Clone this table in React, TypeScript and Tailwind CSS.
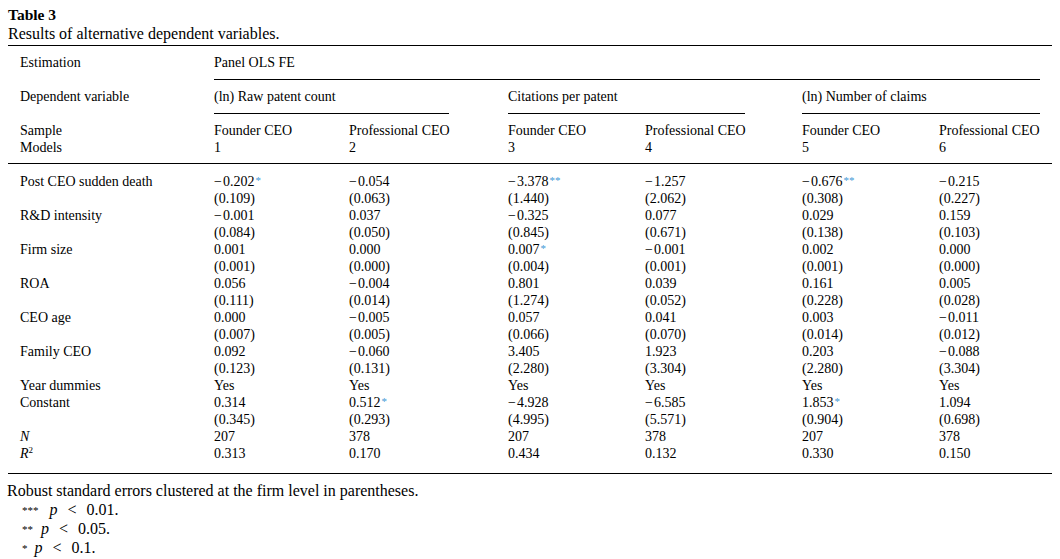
import React from "react";

const cols = "grid grid-cols-[206px_135px_159px_137px_157px_137px_1fr]";

type Row = { label: React.ReactNode; values: string[] };

const rows: Row[] = [
  { label: "Post CEO sudden death", values: ["−0.202*", "−0.054", "−3.378**", "−1.257", "−0.676**", "−0.215"] },
  { label: "", values: ["(0.109)", "(0.063)", "(1.440)", "(2.062)", "(0.308)", "(0.227)"] },
  { label: "R&D intensity", values: ["−0.001", "0.037", "−0.325", "0.077", "0.029", "0.159"] },
  { label: "", values: ["(0.084)", "(0.050)", "(0.845)", "(0.671)", "(0.138)", "(0.103)"] },
  { label: "Firm size", values: ["0.001", "0.000", "0.007*", "−0.001", "0.002", "0.000"] },
  { label: "", values: ["(0.001)", "(0.000)", "(0.004)", "(0.001)", "(0.001)", "(0.000)"] },
  { label: "ROA", values: ["0.056", "−0.004", "0.801", "0.039", "0.161", "0.005"] },
  { label: "", values: ["(0.111)", "(0.014)", "(1.274)", "(0.052)", "(0.228)", "(0.028)"] },
  { label: "CEO age", values: ["0.000", "−0.005", "0.057", "0.041", "0.003", "−0.011"] },
  { label: "", values: ["(0.007)", "(0.005)", "(0.066)", "(0.070)", "(0.014)", "(0.012)"] },
  { label: "Family CEO", values: ["0.092", "−0.060", "3.405", "1.923", "0.203", "−0.088"] },
  { label: "", values: ["(0.123)", "(0.131)", "(2.280)", "(3.304)", "(2.280)", "(3.304)"] },
  { label: "Year dummies", values: ["Yes", "Yes", "Yes", "Yes", "Yes", "Yes"] },
  { label: "Constant", values: ["0.314", "0.512*", "−4.928", "−6.585", "1.853*", "1.094"] },
  { label: "", values: ["(0.345)", "(0.293)", "(4.995)", "(5.571)", "(0.904)", "(0.698)"] },
  { label: <span className="italic">N</span>, values: ["207", "378", "207", "378", "207", "378"] },
  {
    label: (
      <span>
        <span className="italic">R</span>
        <span className="relative -top-[5px] text-[9px] leading-none">2</span>
      </span>
    ),
    values: ["0.313", "0.170", "0.434", "0.132", "0.330", "0.150"],
  },
];

const Num = ({ v }: { v: string }) => {
  const m = v.match(/^(−?)(.*?)(\**)$/);
  const neg = m?.[1];
  const body = m?.[2] ?? v;
  const stars = m?.[3];
  return (
    <span className="whitespace-nowrap">
      {neg && <span className="mr-[1px]">−</span>}
      {body}
      {stars && (
        <span className="relative -top-[2px] ml-px text-[11px] leading-none text-[#3f9ad6]">{stars}</span>
      )}
    </span>
  );
};

const Note = ({ stars, gap, value }: { stars: string; gap: string; value: string }) => (
  <div className="flex items-baseline pl-[15px]">
    <span className="relative -top-[1px] text-[11px] leading-none">{stars}</span>
    <span className={`italic ${gap}`}>p</span>
    <span className="ml-[10px]">&lt;</span>
    <span className="ml-[10px]">{value}</span>
  </div>
);

export default function App() {
  return (
    <div className="min-h-screen bg-white text-black font-['Liberation_Serif',serif]">
      <div className="pl-2 pt-[5px] text-[16px] leading-[19px]">
        <p className="font-bold text-[15.5px]">Table 3</p>
        <p>Results of alternative dependent variables.</p>
      </div>

      <div className="ml-2 mt-[2px] w-[1044px] border-t border-black text-[14px] leading-[17px]">
        {/* header */}
        <div className={cols}>
          <div className="py-2 pl-3">Estimation</div>
          <div className="col-span-6 mr-[12px] border-b border-black py-2">Panel OLS FE</div>
        </div>
        <div className={cols}>
          <div className="py-2 pl-3">Dependent variable</div>
          <div className="col-span-2 mr-[59px] border-b border-black py-2">(ln) Raw patent count</div>
          <div className="col-span-2 mr-[57px] border-b border-black py-2">Citations per patent</div>
          <div className="col-span-2 mr-[12px] border-b border-black py-2">(ln) Number of claims</div>
        </div>
        <div className={`${cols} border-b border-black pt-2 pb-[7px]`}>
          <div className="pl-3">
            <div>Sample</div>
            <div>Models</div>
          </div>
          {["Founder CEO", "Professional CEO", "Founder CEO", "Professional CEO", "Founder CEO", "Professional CEO"].map(
            (s, i) => (
              <div key={i}>
                <div className="whitespace-nowrap">{s}</div>
                <div>{i + 1}</div>
              </div>
            )
          )}
        </div>

        {/* body */}
        <div className="border-b border-black pt-[9px] pb-[11px]">
          {rows.map((r, i) => (
            <div key={i} className={`${cols} h-[17px]`}>
              <div className="pl-3">{r.label}</div>
              {r.values.map((v, j) => (
                <div key={j}>
                  <Num v={v} />
                </div>
              ))}
            </div>
          ))}
        </div>
      </div>

      <div className="pl-[7px] pt-[7px] text-[16px] leading-[19px]">
        <p>Robust standard errors clustered at the firm level in parentheses.</p>
        <Note stars="***" gap="ml-[11px]" value="0.01." />
        <Note stars="**" gap="ml-[8px]" value="0.05." />
        <Note stars="*" gap="ml-[7px]" value="0.1." />
      </div>
    </div>
  );
}
